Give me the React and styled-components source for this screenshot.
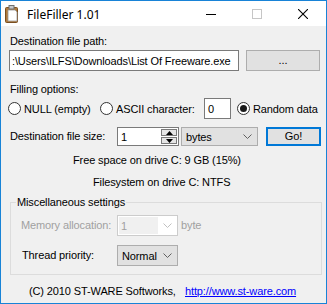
import React from "react";
import styled, { createGlobalStyle } from "styled-components";

const GlobalStyle = createGlobalStyle`
	html, body {
		margin: 0;
		padding: 0;
		background: #f0f0f0;
	}
	* {
		box-sizing: border-box;
	}
`;

const Window = styled.div`
	width: 327px;
	height: 304px;
	border: 1px solid #1883d7;
	background: #f0f0f0;
	font-family: "Liberation Sans", Arial, sans-serif;
	font-size: 11px;
	letter-spacing: -0.12px;
	color: #000;
	display: flex;
	flex-direction: column;
	overflow: hidden;
`;

const TitleBar = styled.div`
	height: 25px;
	background: #fff;
	display: flex;
	align-items: center;
	padding-left: 4px;
	flex-shrink: 0;
	letter-spacing: 0;
`;

const TitleText = styled.span`
	font-family: "Noto Sans", "Liberation Sans", sans-serif;
	font-size: 12px;
	margin-left: 8px;
	flex: 1;
	padding-top: 1px;
`;

const CaptionButton = styled.div`
	width: 46px;
	height: 25px;
	display: flex;
	align-items: center;
	justify-content: center;
`;

const Content = styled.div`
	display: flex;
	flex-direction: column;
	padding: 0 0 0 8px;
`;

const Label = styled.div`
	line-height: 13px;
	height: 13px;
	white-space: nowrap;
	flex-shrink: 0;
	margin-top: ${(p) => p.$top || 0}px;
	margin-left: ${(p) => (p.$left === undefined ? 1 : p.$left)}px;
	width: ${(p) => (p.$width ? `${p.$width}px` : "auto")};
	color: ${(p) => (p.$disabled ? "#a0a0a0" : "#000")};
`;

const Row = styled.div`
	display: flex;
	align-items: center;
	height: ${(p) => p.$height || 21}px;
	margin-top: ${(p) => p.$top || 0}px;
	white-space: nowrap;
`;

const TextBox = styled.div`
	width: ${(p) => p.$width}px;
	height: ${(p) => p.$height || 21}px;
	margin-left: ${(p) => p.$left || 0}px;
	border: 1px solid #7a7a7a;
	background: #fff;
	display: flex;
	align-items: center;
	padding-left: ${(p) => (p.$pad === undefined ? 3 : p.$pad)}px;
	overflow: hidden;
	white-space: nowrap;
	flex-shrink: 0;
	position: relative;
`;

const Button = styled.div`
	width: ${(p) => p.$width}px;
	height: ${(p) => p.$height || 21}px;
	margin-left: ${(p) => p.$left || 0}px;
	border: ${(p) => (p.$default ? "2px solid #0078d7" : "1px solid #adadad")};
	background: #e1e1e1;
	display: flex;
	align-items: center;
	justify-content: center;
	padding-bottom: 1px;
	flex-shrink: 0;
`;

const Combo = styled.div`
	width: ${(p) => p.$width}px;
	height: ${(p) => p.$height || 21}px;
	margin-left: ${(p) => p.$left || 0}px;
	border: 1px solid ${(p) => (p.$disabled ? "#cccccc" : "#adadad")};
	background: ${(p) => (p.$disabled ? "#ffffff" : "#e1e1e1")};
	color: ${(p) => (p.$disabled ? "#a0a0a0" : "#000")};
	display: flex;
	align-items: center;
	padding-left: ${(p) => (p.$disabled ? 0 : 4)}px;
	padding-right: 5px;
	flex-shrink: 0;
`;

const ComboText = styled.span`
	flex: 1;
`;

const ComboEdit = styled.span`
	width: 39px;
	height: 17px;
	margin: 1px;
	background: #f0f0f0;
	padding-left: 2px;
	display: flex;
	align-items: center;
	margin-right: auto;
`;

const RadioItem = styled.label`
	display: flex;
	align-items: center;
	flex-shrink: 0;
	margin-left: ${(p) => p.$left || 0}px;
	width: ${(p) => (p.$width ? `${p.$width}px` : "auto")};
`;

const RadioCircle = styled.span`
	width: 13px;
	height: 13px;
	border-radius: 50%;
	border: 1px solid #333;
	background: #fff;
	margin-right: 3px;
	display: flex;
	align-items: center;
	justify-content: center;
	&::after {
		content: "";
		width: 7px;
		height: 7px;
		border-radius: 50%;
		background: ${(p) => (p.$checked ? "#1a1a1a" : "transparent")};
	}
`;

const Spin = styled.div`
	position: absolute;
	right: 1px;
	top: 1px;
	bottom: 1px;
	width: 16px;
	display: flex;
	flex-direction: column;
	gap: 1px;
`;

const SpinButton = styled.div`
	flex: 1;
	border: 1px solid #7a7a7a;
	background: #e5e5e5;
	display: flex;
	align-items: center;
	justify-content: center;
`;

const Centered = styled.div`
	line-height: 13px;
	height: 13px;
	margin-top: ${(p) => p.$top}px;
	padding-left: ${(p) => p.$left}px;
	white-space: nowrap;
`;

const Group = styled.fieldset`
	margin: ${(p) => p.$top}px 0 0 1px;
	width: 312px;
	border: 1px solid #dcdcdc;
	padding: 6px 0 8px 10px;
	min-width: 0;
	display: flex;
	flex-direction: column;
`;

const Legend = styled.legend`
	padding: 0 1px;
	margin-left: -5px;
	line-height: 13px;
`;

const Footer = styled.div`
	display: flex;
	line-height: 13px;
	margin-top: 10px;
	padding-left: 20px;
	white-space: nowrap;
`;

const Copyright = styled.span`
	width: 156px;
	flex-shrink: 0;
`;

const Link = styled.a`
	color: #0000ff;
	text-decoration: underline;
`;

const Chevron = ({ color = "#606060" }) => (
	<svg width="9" height="5" viewBox="0 0 9 5">
		<path d="M0.5 0.5 L4.5 4.5 L8.5 0.5" fill="none" stroke={color} strokeWidth="1" />
	</svg>
);

const AppIcon = () => (
	<svg width="14" height="18" viewBox="0 0 14 18">
		<rect x="0.5" y="2.5" width="12" height="15" rx="1" fill="#b07a3c" stroke="#7a4e1e" />
		<path d="M3 5 H10 L12 7 V16 H3 Z" fill="#ffffff" stroke="#9a9a9a" strokeWidth="0.8" />
		<rect x="4" y="0.5" width="5" height="3.5" fill="#c8c8c8" stroke="#6f6f6f" />
	</svg>
);

export default function App() {
	return (
		<>
			<GlobalStyle />
			<Window>
				<TitleBar>
					<AppIcon />
					<TitleText>FileFiller 1.01</TitleText>
					<CaptionButton>
						<svg width="10" height="10" viewBox="0 0 10 10">
							<path d="M0 5.5 H10" stroke="#000" strokeWidth="1" />
						</svg>
					</CaptionButton>
					<CaptionButton>
						<svg width="10" height="10" viewBox="0 0 10 10">
							<rect x="0.5" y="0.5" width="9" height="9" fill="none" stroke="#c6c6c6" />
						</svg>
					</CaptionButton>
					<CaptionButton>
						<svg width="10" height="10" viewBox="0 0 10 10">
							<path d="M0 0 L10 10 M10 0 L0 10" stroke="#000" strokeWidth="1.1" />
						</svg>
					</CaptionButton>
				</TitleBar>
				<Content>
					<Label $top={9}>Destination file path:</Label>
					<Row $top={2}>
						<TextBox $width={230} $pad={2}>
							:\Users\ILFS\Downloads\List Of Freeware.exe
						</TextBox>
						<Button $width={74} $left={7}>...</Button>
					</Row>
					<Label $top={12}>Filling options:</Label>
					<Row $top={2}>
						<RadioItem $left={-1} $width={92}>
							<RadioCircle />
							NULL (empty)
						</RadioItem>
						<RadioItem $width={104}>
							<RadioCircle />
							ASCII character:
						</RadioItem>
						<TextBox $width={27}>0</TextBox>
						<RadioItem $left={6}>
							<RadioCircle $checked />
							Random data
						</RadioItem>
					</Row>
					<Row $top={8} $height={19}>
						<Label $width={107}>Destination file size:</Label>
						<TextBox $width={62} $height={19}>
							1
							<Spin>
								<SpinButton>
									<svg width="7" height="4" viewBox="0 0 7 4">
										<path d="M0 4 L3.5 0 L7 4 Z" fill="#000" />
									</svg>
								</SpinButton>
								<SpinButton>
									<svg width="7" height="4" viewBox="0 0 7 4">
										<path d="M0 0 L3.5 4 L7 0 Z" fill="#000" />
									</svg>
								</SpinButton>
							</Spin>
						</TextBox>
						<Combo $width={77} $height={19} $left={2}>
							<ComboText>bytes</ComboText>
							<Chevron />
						</Combo>
						<Button $width={55} $height={19} $left={8} $default>
							Go!
						</Button>
					</Row>
					<Centered $top={8} $left={64}>Free space on drive C: 9 GB (15%)</Centered>
					<Centered $top={9} $left={84}>Filesystem on drive C: NTFS</Centered>
					<Group $top={7}>
						<Legend>Miscellaneous settings</Legend>
						<Row>
							<Label $left={0} $width={96} $disabled>Memory allocation:</Label>
							<Combo $width={61} $disabled>
								<ComboEdit>1</ComboEdit>
								<Chevron color="#c0c0c0" />
							</Combo>
							<Label $left={3} $disabled>byte</Label>
						</Row>
						<Row $top={9}>
							<Label $left={1} $width={95}>Thread priority:</Label>
							<Combo $width={61}>
								<ComboText>Normal</ComboText>
								<Chevron />
							</Combo>
						</Row>
					</Group>
					<Footer>
						<Copyright>(C) 2010 ST-WARE Softworks,</Copyright>
						<Link href="#">http://www.st-ware.com</Link>
					</Footer>
				</Content>
			</Window>
		</>
	);
}
